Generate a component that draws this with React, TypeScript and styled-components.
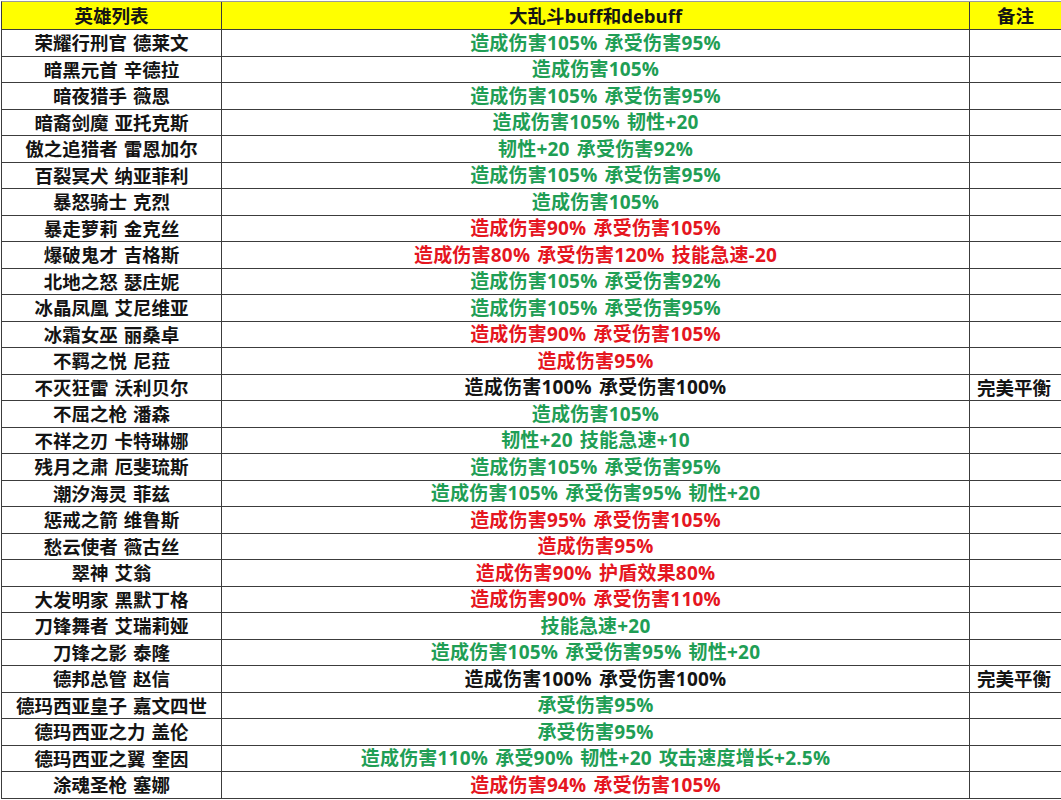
import * as React from "react";
import styled, { createGlobalStyle } from "styled-components";

type Tone = "buff" | "nerf" | "even";

interface IHero {
    name: string;
    effect: string;
    tone: Tone;
    note?: string;
}

const heroes: IHero[] = [
    { name: "荣耀行刑官 德莱文", effect: "造成伤害105% 承受伤害95%", tone: "buff" },
    { name: "暗黑元首 辛德拉", effect: "造成伤害105%", tone: "buff" },
    { name: "暗夜猎手 薇恩", effect: "造成伤害105% 承受伤害95%", tone: "buff" },
    { name: "暗裔剑魔 亚托克斯", effect: "造成伤害105% 韧性+20", tone: "buff" },
    { name: "傲之追猎者 雷恩加尔", effect: "韧性+20 承受伤害92%", tone: "buff" },
    { name: "百裂冥犬 纳亚菲利", effect: "造成伤害105% 承受伤害95%", tone: "buff" },
    { name: "暴怒骑士 克烈", effect: "造成伤害105%", tone: "buff" },
    { name: "暴走萝莉 金克丝", effect: "造成伤害90% 承受伤害105%", tone: "nerf" },
    { name: "爆破鬼才 吉格斯", effect: "造成伤害80% 承受伤害120% 技能急速-20", tone: "nerf" },
    { name: "北地之怒 瑟庄妮", effect: "造成伤害105% 承受伤害92%", tone: "buff" },
    { name: "冰晶凤凰 艾尼维亚", effect: "造成伤害105% 承受伤害95%", tone: "buff" },
    { name: "冰霜女巫 丽桑卓", effect: "造成伤害90% 承受伤害105%", tone: "nerf" },
    { name: "不羁之悦 尼菈", effect: "造成伤害95%", tone: "nerf" },
    { name: "不灭狂雷 沃利贝尔", effect: "造成伤害100% 承受伤害100%", tone: "even", note: "完美平衡" },
    { name: "不屈之枪 潘森", effect: "造成伤害105%", tone: "buff" },
    { name: "不祥之刃 卡特琳娜", effect: "韧性+20 技能急速+10", tone: "buff" },
    { name: "残月之肃 厄斐琉斯", effect: "造成伤害105% 承受伤害95%", tone: "buff" },
    { name: "潮汐海灵 菲兹", effect: "造成伤害105% 承受伤害95% 韧性+20", tone: "buff" },
    { name: "惩戒之箭 维鲁斯", effect: "造成伤害95% 承受伤害105%", tone: "nerf" },
    { name: "愁云使者 薇古丝", effect: "造成伤害95%", tone: "nerf" },
    { name: "翠神 艾翁", effect: "造成伤害90% 护盾效果80%", tone: "nerf" },
    { name: "大发明家 黑默丁格", effect: "造成伤害90% 承受伤害110%", tone: "nerf" },
    { name: "刀锋舞者 艾瑞莉娅", effect: "技能急速+20", tone: "buff" },
    { name: "刀锋之影 泰隆", effect: "造成伤害105% 承受伤害95% 韧性+20", tone: "buff" },
    { name: "德邦总管 赵信", effect: "造成伤害100% 承受伤害100%", tone: "even", note: "完美平衡" },
    { name: "德玛西亚皇子 嘉文四世", effect: "承受伤害95%", tone: "buff" },
    { name: "德玛西亚之力 盖伦", effect: "承受伤害95%", tone: "buff" },
    { name: "德玛西亚之翼 奎因", effect: "造成伤害110% 承受90% 韧性+20 攻击速度增长+2.5%", tone: "buff" },
    { name: "涂魂圣枪 塞娜", effect: "造成伤害94% 承受伤害105%", tone: "nerf" },
];

const toneColor: Record<Tone, string> = {
    buff: "#1f9e55",
    nerf: "#e5161f",
    even: "#141414",
};

const GlobalStyle = createGlobalStyle`
    html, body {
        margin: 0;
        padding: 0;
        background: #fff;
    }

    body {
        font-family: "Open Sans", "Noto Sans CJK SC", sans-serif;
        overflow: hidden;
    }
`;

const Sheet = styled.div`
    display: grid;
    grid-template-columns: 220px 748px 92px;
    grid-template-rows: 28px;
    grid-auto-rows: 26.5px;
    margin: 1px 0 0 1px;
    border-top: 1px solid #9a9a9a;
    border-left: 1px solid #3c3c3c;
`;

const Cell = styled.div<{ $align?: "center" | "left"; $header?: boolean; $color?: string }>`
    display: flex;
    align-items: center;
    justify-content: ${(p) => (p.$align === "left" ? "flex-start" : "center")};
    padding-left: ${(p) => (p.$align === "left" ? "7px" : "0")};
    padding-top: 1px;
    border-right: 1px solid #3c3c3c;
    border-bottom: 1px solid #3c3c3c;
    background: ${(p) => (p.$header ? "#ffff00" : "#fff")};
    color: ${(p) => p.$color || "#141414"};

    font-size: 18.5px;
    font-weight: 700;
    line-height: 1;
    word-spacing: 1px;
    white-space: nowrap;
    overflow: hidden;
`;

const Effect = styled.span`
    font-size: 19px;
    word-spacing: 2px;
    letter-spacing: 0.2px;
`;

export default function App() {
    return (
        <>
            <GlobalStyle />
            <Sheet>
                <Cell $header>英雄列表</Cell>
                <Cell $header>大乱斗buff和debuff</Cell>
                <Cell $header>备注</Cell>

                {heroes.map((h) => (
                    <React.Fragment key={h.name}>
                        <Cell>{h.name}</Cell>
                        <Cell $color={toneColor[h.tone]}>
                            <Effect>{h.effect}</Effect>
                        </Cell>
                        <Cell $align="left">{h.note}</Cell>
                    </React.Fragment>
                ))}
            </Sheet>
        </>
    );
}
